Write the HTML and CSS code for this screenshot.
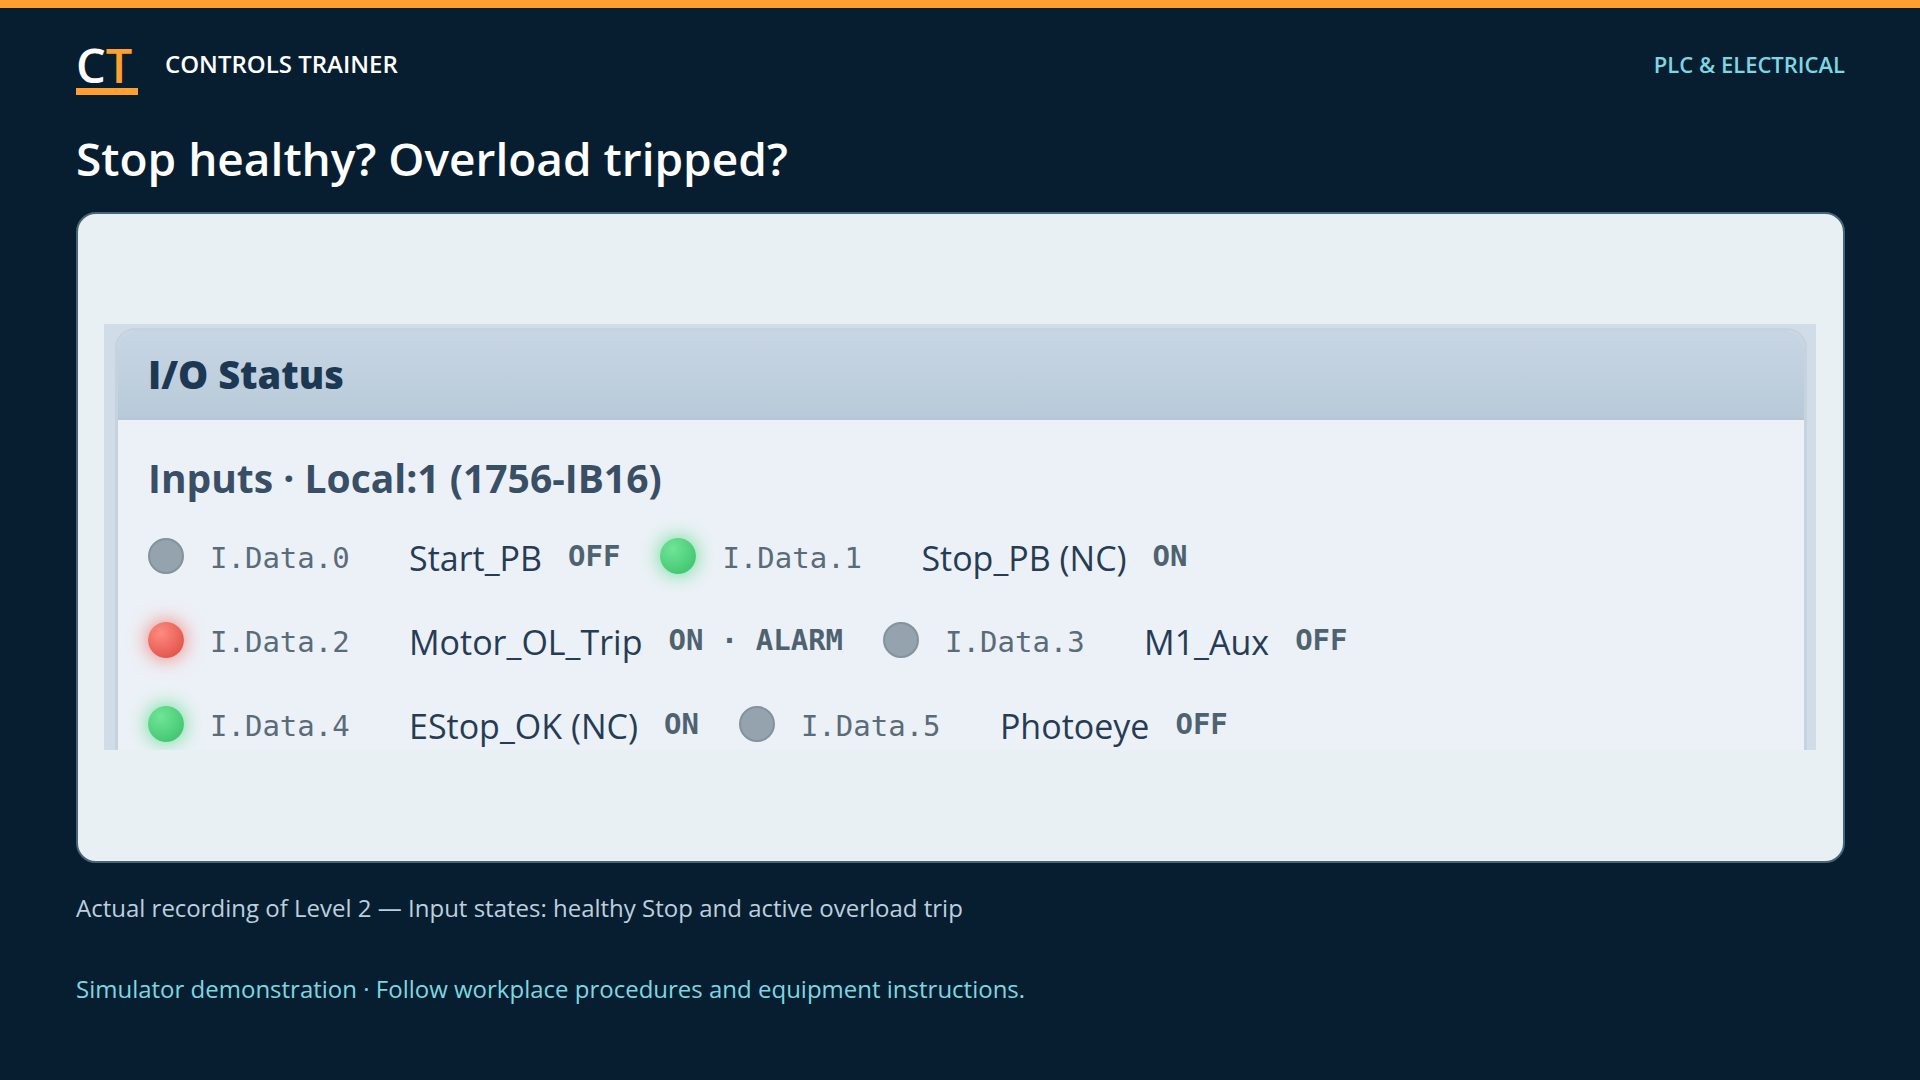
FILE: index.html
```html
<!DOCTYPE html>
<html lang="en">
<head>
<meta charset="utf-8">
<meta name="viewport" content="width=device-width, initial-scale=1">
<title>Controls Trainer</title>
<link rel="stylesheet" href="styles.css">
</head>
<body>
<header class="masthead">
  <div class="logo">C<span class="logo-accent">T</span></div>
  <p class="brand">CONTROLS TRAINER</p>
  <p class="topic">PLC &amp; ELECTRICAL</p>
</header>
<main class="content">
  <h1 class="title">Stop healthy? Overload tripped?</h1>
  <figure class="figure">
    <div class="card">
      <div class="recording">
        <section class="panel">
          <h2 class="panel-title">I/O Status</h2>
          <div class="panel-body">
            <h3 class="group-title">Inputs · Local:1 (1756-IB16)</h3>
            <ul class="points">
              <li class="row">
                <div class="point"><span class="led"></span><span class="address">I.Data.0</span><span class="name">Start_PB</span><span class="state">OFF</span></div>
                <div class="point"><span class="led led-on"></span><span class="address">I.Data.1</span><span class="name">Stop_PB (NC)</span><span class="state">ON</span></div>
              </li>
              <li class="row">
                <div class="point"><span class="led led-alarm"></span><span class="address">I.Data.2</span><span class="name">Motor_OL_Trip</span><span class="state">ON · ALARM</span></div>
                <div class="point"><span class="led"></span><span class="address">I.Data.3</span><span class="name">M1_Aux</span><span class="state">OFF</span></div>
              </li>
              <li class="row">
                <div class="point"><span class="led led-on"></span><span class="address">I.Data.4</span><span class="name">EStop_OK (NC)</span><span class="state">ON</span></div>
                <div class="point"><span class="led"></span><span class="address">I.Data.5</span><span class="name">Photoeye</span><span class="state">OFF</span></div>
              </li>
            </ul>
          </div>
        </section>
      </div>
    </div>
    <figcaption class="caption">Actual recording of Level 2 — Input states: healthy Stop and active overload trip</figcaption>
  </figure>
</main>
<footer class="notice">Simulator demonstration · Follow workplace procedures and equipment instructions.</footer>
</body>
</html>
```
FILE: styles.css
```css
* {
  box-sizing: border-box;
  margin: 0;
  padding: 0;
}

body {
  min-height: 100vh;
  border-top: 8px solid #ff9f30;
  padding: 32px 75px 0 76px;
  background: #071e30;
  color: #fff;
  font-family: "Open Sans", "Noto Sans", sans-serif;
}

.masthead {
  display: flex;
  align-items: flex-start;
}

.logo {
  width: 62px;
  height: 55px;
  border-bottom: 7px solid #ff9f30;
  font-size: 47px;
  font-weight: 600;
  line-height: 50px;
}

.logo-accent {
  color: #ff9f30;
}

.brand {
  margin-left: 27px;
  font-size: 24px;
  font-weight: 600;
  line-height: 48px;
}

.topic {
  margin-left: auto;
  color: #7cd7e2;
  font-size: 22px;
  font-weight: 600;
  line-height: 48px;
}

.title {
  margin-top: 31px;
  font-size: 46px;
  font-weight: 600;
  line-height: 64px;
}

.card {
  margin-top: 22px;
  border: 2px solid #486576;
  border-radius: 20px;
  padding: 110px 27px 111px 26px;
  background: #e8f0f4;
}

.recording {
  height: 426px;
  overflow: hidden;
  padding: 4px 9px 0 11px;
  background: #d0dce8;
}

.panel {
  height: 480px;
  overflow: hidden;
  border: 3px solid #c6d3df;
  border-radius: 20px;
  background: #ecf1f7;
}

.panel-title {
  border-bottom: 2px solid #b5c7d6;
  padding: 0 30px;
  background: linear-gradient(#c8d6e4, #b8cad9);
  color: #1c3853;
  font-size: 38px;
  font-weight: 800;
  line-height: 87px;
}

.panel-body {
  padding: 29px 30px 0;
}

.group-title {
  color: #384f66;
  font-size: 39px;
  font-weight: 700;
  line-height: 58px;
}

.points {
  margin-top: 7px;
  list-style: none;
}

.row {
  display: flex;
  align-items: center;
  gap: 40px;
  height: 84px;
}

.point {
  display: flex;
  align-items: center;
}

.led {
  width: 36px;
  height: 36px;
  border: 2px solid #84929c;
  border-radius: 50%;
  background: #94a3ad;
}

.led-on {
  border: 0;
  background: radial-gradient(circle at 35% 30%, #70e596, #3fc46e 85%);
  box-shadow: 0 0 20px #5ddb8a;
}

.led-alarm {
  border: 0;
  background: radial-gradient(circle at 35% 30%, #ff8b80, #df5147 85%);
  box-shadow: 0 0 20px #f0786f;
}

.address,
.state {
  font-family: "DejaVu Sans Mono", "Liberation Mono", monospace;
  font-size: 29px;
  line-height: 36px;
}

.address {
  width: 199px;
  margin-left: 26px;
  padding-top: 4px;
  color: #5a6b79;
}

.name {
  padding-top: 4px;
  color: #263c54;
  font-size: 34px;
  line-height: 48px;
}

.state {
  margin-left: 26px;
  color: #4f6270;
  font-weight: 700;
}

.caption {
  margin-top: 27px;
  color: #bdcfdf;
  font-size: 24px;
  line-height: 36px;
}

.notice {
  margin-top: 45px;
  color: #7cd7e2;
  font-size: 24px;
  line-height: 36px;
}
```
